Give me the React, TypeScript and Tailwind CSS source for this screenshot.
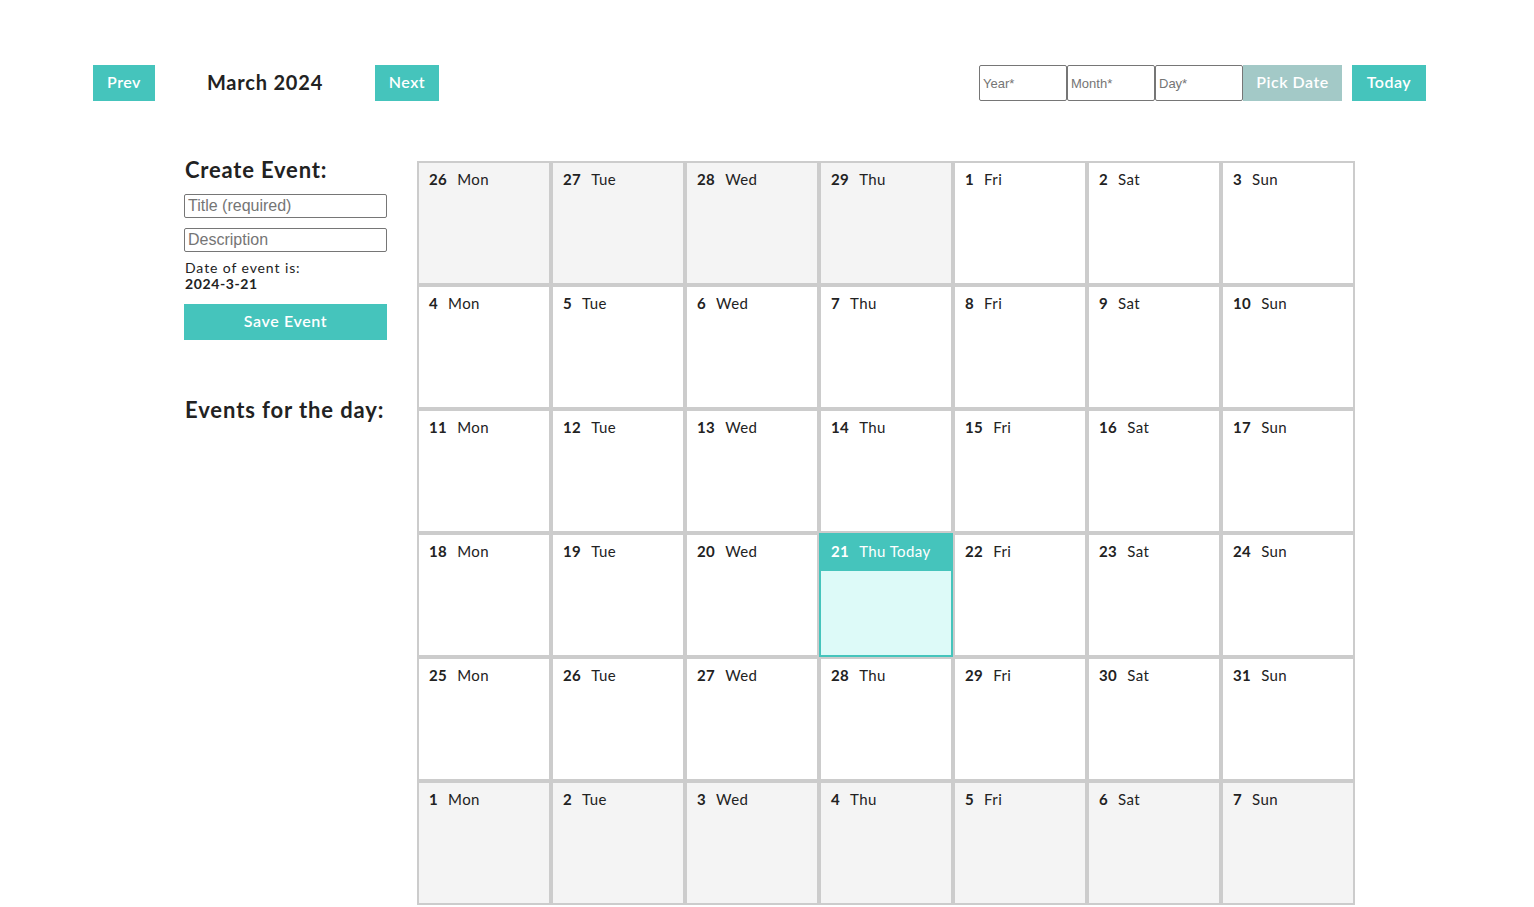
const days = ["Mon", "Tue", "Wed", "Thu", "Fri", "Sat", "Sun"];

type Cell = { day: number; outside: boolean; today?: boolean };

function buildCells(): Cell[] {
  const cells: Cell[] = [];
  [26, 27, 28, 29].forEach((d) => cells.push({ day: d, outside: true }));
  for (let d = 1; d <= 31; d++) cells.push({ day: d, outside: false, today: d === 21 });
  for (let d = 1; d <= 7; d++) cells.push({ day: d, outside: true });
  return cells;
}

const font = { fontFamily: "Lato, 'Noto Sans', sans-serif" };
const inputFont = { fontFamily: "'Liberation Sans', Arial, sans-serif" };

function DayCell({ cell, index }: { cell: Cell; index: number }) {
  const name = days[index % 7];
  if (cell.today) {
    return (
      <div className="border-2 border-[#45c4bc] bg-[#ddfaf8] flex flex-col">
        <div className="bg-[#45c4bc] h-[36px] pl-[10px] pt-[6px] text-[15px] leading-[20px] tracking-[0.4px] text-white">
          <span className="font-bold mr-[10px]">{cell.day}</span>
          <span>{name} Today</span>
        </div>
      </div>
    );
  }
  return (
    <div
      className={`border-2 border-[#cccccc] ${cell.outside ? "bg-[#f4f4f4]" : "bg-white"}`}
    >
      <div className="h-[36px] pl-[10px] pt-[6px] text-[15px] leading-[20px] tracking-[0.4px] text-[#222]">
        <span className="font-bold mr-[10px]">{cell.day}</span>
        <span>{name}</span>
      </div>
    </div>
  );
}

export default function App() {
  const cells = buildCells();
  return (
    <div className="min-h-screen bg-white text-[#222]" style={font}>
      {/* Header */}
      <div className="flex items-center justify-between pt-[65px] pl-[93px] pr-[108px]">
        <div className="flex items-center">
          <button className="h-[36px] w-[62px] pb-[3px] bg-[#45c4bc] text-white text-[16px] font-semibold tracking-[0.5px]">
            Prev
          </button>
          <h1 className="w-[220px] pb-[3px] text-center text-[20px] font-bold tracking-[0.8px]">
            March 2024
          </h1>
          <button className="h-[36px] w-[64px] pb-[3px] bg-[#45c4bc] text-white text-[16px] font-semibold tracking-[0.5px]">
            Next
          </button>
        </div>
        <div className="flex items-center">
          {["Year*", "Month*", "Day*"].map((p) => (
            <input
              key={p}
              placeholder={p}
              className="h-[36px] w-[88px] border border-[#767676] rounded-[2px] px-[3px] text-[13px] placeholder:text-[#757575]"
              style={inputFont}
            />
          ))}
          <button className="h-[36px] w-[99px] pb-[3px] bg-[#a3c9c7] text-white text-[16px] font-semibold tracking-[0.5px]">
            Pick Date
          </button>
          <button className="ml-[10px] h-[36px] w-[74px] pb-[3px] bg-[#45c4bc] text-white text-[16px] font-semibold tracking-[0.5px]">
            Today
          </button>
        </div>
      </div>

      {/* Body */}
      <div className="flex pl-[184px] pt-[60px] pb-[2px]">
        <div className="w-[203px] mr-[30px]">
          <h2 className="text-[22px] font-bold leading-[22px] -mt-[2px] pl-[1px] tracking-[0.8px]">
            Create Event:
          </h2>
          <input
            placeholder="Title (required)"
            className="mt-[13px] block h-[24px] w-[203px] border border-[#767676] rounded-[2px] px-[3px] text-[16px] placeholder:text-[#757575]"
            style={inputFont}
          />
          <input
            placeholder="Description"
            className="mt-[10px] block h-[24px] w-[203px] border border-[#767676] rounded-[2px] px-[3px] text-[16px] placeholder:text-[#757575]"
            style={inputFont}
          />
          <p className="mt-[8px] pl-[1px] text-[14px] leading-[16px] tracking-[0.9px]">
            Date of event is:
          </p>
          <p className="text-[14px] pl-[1px] leading-[16px] font-bold tracking-[0.6px]">2024-3-21</p>
          <button className="mt-[12px] h-[36px] w-[203px] pb-[3px] bg-[#45c4bc] text-white text-[16px] font-semibold tracking-[0.6px]">
            Save Event
          </button>
          <h2 className="mt-[57px] pl-[1px] text-[22px] font-bold leading-[26px] tracking-[0.9px]">
            Events for the day:
          </h2>
        </div>
        <div className="grid grid-cols-[repeat(7,134px)] auto-rows-[124px]">
          {cells.map((c, i) => (
            <DayCell key={i} cell={c} index={i} />
          ))}
        </div>
      </div>
    </div>
  );
}
